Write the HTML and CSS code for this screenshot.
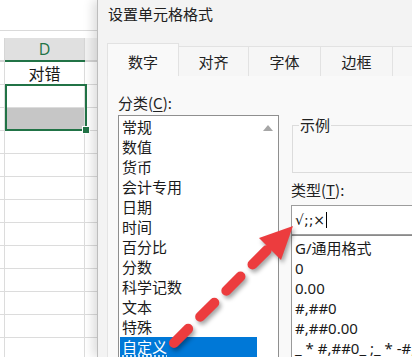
FILE: index.html
```html
<!DOCTYPE html>
<html lang="zh-CN">
<head>
    <meta charset="UTF-8">
    <meta name="viewport" content="width=device-width, initial-scale=1.0">
    <title>设置单元格格式</title>
    <link rel="stylesheet" href="styles.css">
</head>
<body>
    <div class="screen">
        <div class="sheet">
            <div class="formula-gap"></div>
            <div class="head-row">
                <div class="hcell rowhead"></div>
                <div class="hcell col-d">D</div>
                <div class="hcell col-e"></div>
            </div>
            <div class="grid">
                <div class="cell"></div><div class="cell text">对错</div><div class="cell"></div>
                <div class="cell"></div><div class="cell"></div><div class="cell"></div>
                <div class="cell"></div><div class="cell filled"></div><div class="cell"></div>
                <div class="cell"></div><div class="cell"></div><div class="cell"></div>
                <div class="cell"></div><div class="cell"></div><div class="cell"></div>
                <div class="cell"></div><div class="cell"></div><div class="cell"></div>
                <div class="cell"></div><div class="cell"></div><div class="cell"></div>
                <div class="cell"></div><div class="cell"></div><div class="cell"></div>
                <div class="cell"></div><div class="cell"></div><div class="cell"></div>
                <div class="cell"></div><div class="cell"></div><div class="cell"></div>
                <div class="cell"></div><div class="cell"></div><div class="cell"></div>
                <div class="cell"></div><div class="cell"></div><div class="cell"></div>
                <div class="cell"></div><div class="cell"></div><div class="cell"></div>
            </div>
            <!-- selected range D2:D3 -->
            <div class="selection"><span class="handle"></span></div>
        </div>

        <div class="dialog">
            <div class="title">设置单元格格式</div>
            <div class="tabs">
                <div class="tab active">数字</div>
                <div class="tab">对齐</div>
                <div class="tab">字体</div>
                <div class="tab">边框</div>
                <div class="tab"></div>
            </div>
            <div class="panel">
                <div class="col-left">
                    <div class="label">分类(<u>C</u>):</div>
                    <div class="listbox">
                        <ul class="items">
                            <li>常规</li>
                            <li>数值</li>
                            <li>货币</li>
                            <li>会计专用</li>
                            <li>日期</li>
                            <li>时间</li>
                            <li>百分比</li>
                            <li>分数</li>
                            <li>科学记数</li>
                            <li>文本</li>
                            <li>特殊</li>
                            <li class="selected"><span>自定义</span></li>
                        </ul>
                        <div class="scrollbar"><span class="up"></span></div>
                    </div>
                </div>
                <div class="col-right">
                    <div class="group">
                        <span class="legend">示例</span>
                    </div>
                    <div class="label type-label">类型(<u>T</u>):</div>
                    <div class="input"><span class="caret">√;;×</span></div>
                    <ul class="formats">
                        <li>G/通用格式</li>
                        <li>0</li>
                        <li>0.00</li>
                        <li>#,##0</li>
                        <li>#,##0.00</li>
                        <li>_ * #,##0_ ;_ * -#,##0_ ;_ * "-"_ ;_ @_ </li>
                    </ul>
                </div>
            </div>
        </div>

        <svg class="arrow" width="412" height="357" viewBox="0 0 412 357">
            <line x1="174" y1="343" x2="268" y2="249" stroke="#ec3c3e" stroke-width="10" stroke-linecap="round" stroke-dasharray="20 17"/>
            <polygon points="293,226 259,238 281,260" fill="#ec3c3e"/>
        </svg>
    </div>
</body>
</html>
```

FILE: styles.css
```css
body {
    margin: 0;
    background: #fff;
    font-family: "Noto Sans", "Noto Sans CJK SC", sans-serif;
    color: #1a1a1a;
    overflow: hidden;
}
ul {
    list-style: none;
    margin: 0;
    padding: 0;
}
.screen {
    position: relative;
    display: flex;
    width: 412px;
    height: 357px;
    overflow: hidden;
}

/* spreadsheet behind the dialog */
.sheet {
    position: relative;
    width: 97px;
    flex: none;
    background: #fff;
}
.formula-gap {
    height: 30px;
    border-bottom: 1px solid #dadada;
    margin-bottom: 7px;
}
.head-row {
    display: grid;
    grid-template-columns: 5px 80px 1fr;
    height: 22px;
    border-bottom: 2px solid #d4d4d4;
}
.hcell {
    border-right: 1px solid #d6d6d6;
}
.col-d {
    background: #e0e0e0;
    color: #217346;
    font-family: "Open Sans", sans-serif;
    font-size: 16px;
    line-height: 22px;
    text-align: center;
    box-shadow: 0 2px 0 #217346;
}
.col-e {
    background: #f2f2f2;
    border-right: none;
}
.grid {
    display: grid;
    grid-template-columns: 5px 80px 1fr;
    grid-auto-rows: 23px;
}
.cell {
    border-right: 1px solid #dcdcdc;
    border-bottom: 1px solid #dcdcdc;
}
.cell:nth-child(3n) {
    border-right: none;
}
.text {
    font-family: "Noto Sans CJK SC", sans-serif;
    font-size: 16px;
    line-height: 22px;
    text-align: center;
}
.filled {
    background: #c6c6c6;
}
.selection {
    position: absolute;
    left: 5px;
    top: 84px;
    width: 78px;
    height: 43px;
    border: 2px solid #217346;
}
.handle {
    position: absolute;
    right: -5px;
    bottom: -5px;
    width: 6px;
    height: 6px;
    background: #217346;
    border: 1px solid #fff;
}

/* format cells dialog */
.dialog {
    position: relative;
    z-index: 1;
    flex: 1;
    min-width: 0;
    background: #f3f3f3;
    border-left: 1px solid #bdbdbd;
    box-shadow: -4px 0 10px rgba(0, 0, 0, 0.14);
    font-family: "Noto Sans CJK SC", sans-serif;
    font-size: 15px;
}
.title {
    height: 43px;
    padding: 4px 0 0 10px;
    box-sizing: border-box;
    line-height: 20px;
    color: #202020;
}
.tabs {
    display: flex;
    align-items: flex-end;
    height: 33px;
    padding-left: 9px;
}
.tab {
    flex: none;
    width: 72px;
    height: 30px;
    box-sizing: border-box;
    border: 1px solid #e2e2e2;
    border-bottom: none;
    border-left: none;
    background: #f6f6f6;
    text-align: center;
    line-height: 30px;
    color: #222;
}
.tab.active {
    height: 33px;
    line-height: 35px;
    border-left: 1px solid #e2e2e2;
    background: #f9f9f9;
}
.tab:nth-child(2) {
    width: 70px;
}
.panel {
    display: flex;
    gap: 12px;
    height: 281px;
    margin-left: 9px;
    padding: 17px 0 0 10px;
    box-sizing: border-box;
    background: #f9f9f9;
    border-left: 1px solid #e4e4e4;
}
.label {
    line-height: 20px;
    color: #222;
}
.label u {
    text-decoration-thickness: 1px;
    text-underline-offset: 2px;
}

.col-left {
    width: 161px;
    flex: none;
}
.listbox {
    display: flex;
    margin-top: 2px;
    height: 250px;
    background: #fff;
    border: 1px solid #8f8f8f;
}
.items {
    flex: 1;
    padding: 1px 0 0 1px;
}
.items li {
    height: 20px;
    padding-left: 2px;
    line-height: 20px;
}
.items .selected {
    background: #0078d7;
    color: #fff;
}
.items .selected span {
    text-decoration: underline dotted;
    text-underline-offset: 3px;
}
.scrollbar {
    width: 21px;
    flex: none;
    display: flex;
    justify-content: center;
}
.up {
    width: 0;
    height: 0;
    margin-top: 9px;
    border-left: 5px solid transparent;
    border-right: 5px solid transparent;
    border-bottom: 6px solid #a6a6a6;
}

.col-right {
    width: 200px;
    flex: none;
}
.group {
    height: 48px;
    margin: 32px 0 0 1px;
    padding-left: 6px;
    box-sizing: border-box;
    border: 1px solid #dcdcdc;
}
.legend {
    display: block;
    width: fit-content;
    margin-top: -9px;
    padding: 0 1px;
    background: #f9f9f9;
    line-height: 16px;
    color: #222;
}
.type-label {
    margin-top: 7px;
}
.input {
    height: 30px;
    margin-top: 5px;
    padding-left: 3px;
    box-sizing: border-box;
    background: #fff;
    border: 1px solid #9d9d9d;
    font-family: "DejaVu Sans", sans-serif;
    font-size: 14px;
    line-height: 28px;
    color: #111;
}
.caret {
    padding-right: 1px;
    border-right: 1px solid #000;
}
.formats {
    height: 130px;
    padding: 2px 0 0 3px;
    background: #fff;
    border: 1px solid #9a9a9a;
    border-top-color: #8a8a8a;
    font-family: "Noto Sans", "Noto Sans CJK SC", sans-serif;
}
.formats li {
    height: 20px;
    line-height: 20px;
    white-space: nowrap;
}

.arrow {
    position: absolute;
    left: 0;
    top: 0;
    z-index: 2;
    pointer-events: none;
    filter: drop-shadow(2px 3px 2px rgba(0, 0, 0, 0.35));
}
```
